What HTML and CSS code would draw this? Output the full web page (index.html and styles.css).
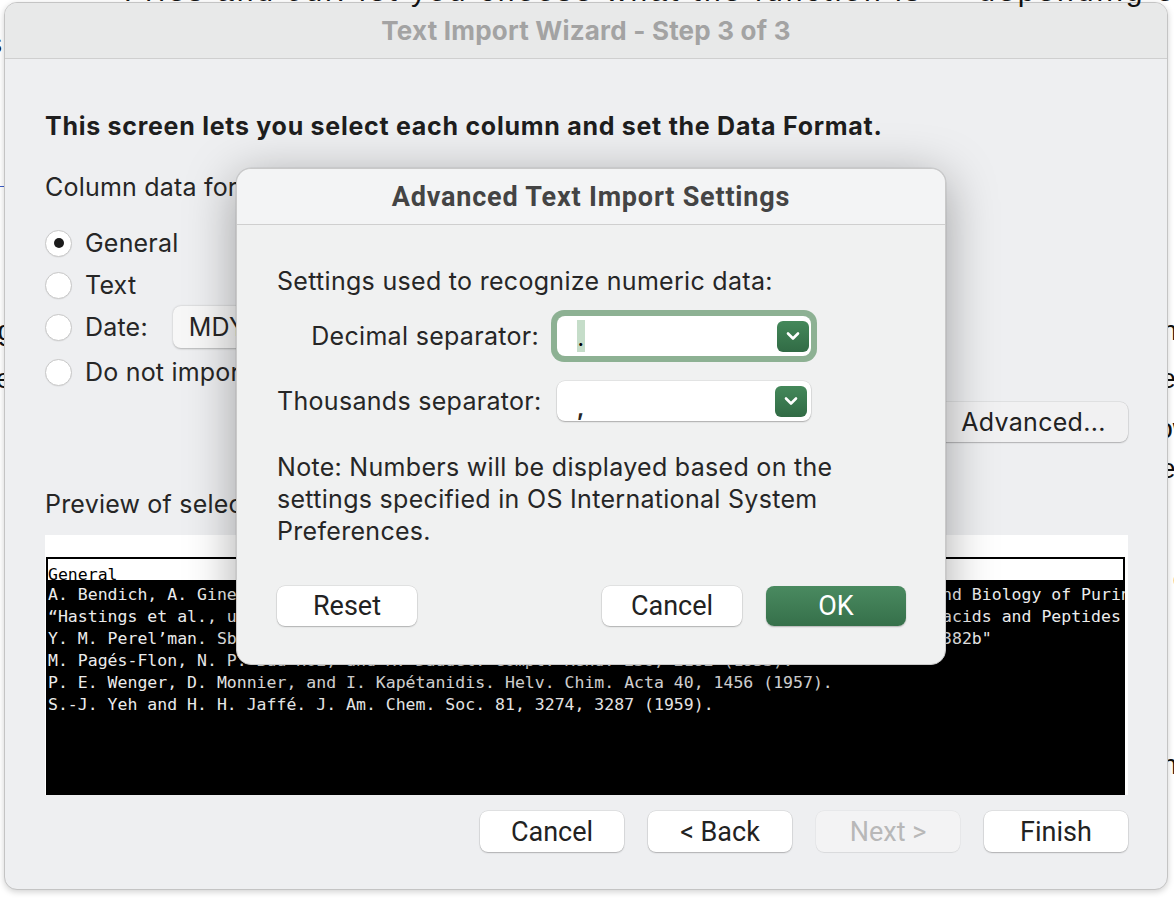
FILE: index.html
```html
<!DOCTYPE html>
<html>
<head>
<meta charset="utf-8">
<link rel="stylesheet" href="styles.css">
</head>
<body>
<div class="doc">
  <p class="doc-line l2">s</p>
  <p class="doc-line l3 link">&nbsp;</p>
  <p class="doc-line l4">ug calculated values and constants for the relevant series of compounds is shown in the tables here for</p>
  <p class="doc-line l5">ce for the computation of the results of the related reaction constants as printed in the tables used:</p>
  <p class="doc-line l6">e of the substituent constants used by the program and the results are entered in the tables below e.</p>
  <p class="doc-line l6b">of the substituent constants used by the program and the results are entered in the tables below ta.</p>
  <p class="doc-line l7">u table of all of the values which were obtained in the data set is entered here in the rows below of</p>
  <p class="doc-line l8 purple">c</p>
  <p class="doc-line l9">o computation of the constants in the equation shown above for each of the rows in the tables shown o</p>
</div>

<div class="top-bleed"><div class="top-bleed-text">Fries and Jur. let you choose what the function is — depending on your</div></div>

<div class="window">
  <div class="titlebar">Text Import Wizard - Step 3 of 3</div>
  <div class="wiz-body">
    <h1 class="wiz-heading">This screen lets you select each column and set the Data Format.</h1>
    <p class="wiz-label">Column data format:</p>
    <div class="radio-list">
      <label class="radio-row"><span class="radio checked"></span><span>General</span></label>
      <label class="radio-row"><span class="radio"></span><span>Text</span></label>
      <label class="radio-row"><span class="radio"></span><span>Date:</span><span class="mdy">MDY</span></label>
      <label class="radio-row last"><span class="radio"></span><span>Do not import column (skip)</span></label>
    </div>
    <div class="advanced-row"><button class="btn advanced">Advanced...</button></div>
    <p class="wiz-label preview-label">Preview of selected data:</p>
    <div class="preview">
      <div class="preview-inner">
        <div class="preview-head"><span>General</span></div>
        <div class="preview-rows">
          <div>A. Bendich, A. Giner-Sorolla, and J. J. Fox. Ciba Foundation Symposium, on the Chemistry and Biology of Purines (1957).</div>
          <div>“Hastings et al., unpublished data,” cited in: J. T. Edsall and J. Wyman. Proteins, Amino acids and Peptides (1943).</div>
          <div>Y. M. Perel’man. Sbornik Statei Obshch. Khim. 2, 1101–6 (1953); Chem. Abstr. 49, 5382a, "5382b"</div>
          <div>M. Pagés-Flon, N. P. Buu-Hoï, and R. Daudel. Compt. Rend. 236, 2182 (1953).</div>
          <div>P. E. Wenger, D. Monnier, and I. Kapétanidis. Helv. Chim. Acta 40, 1456 (1957).</div>
          <div>S.-J. Yeh and H. H. Jaffé. J. Am. Chem. Soc. 81, 3274, 3287 (1959).</div>
        </div>
      </div>
    </div>
    <div class="wiz-buttons">
      <button class="btn wbtn">Cancel</button>
      <button class="btn wbtn">&lt; Back</button>
      <button class="btn wbtn disabled">Next &gt;</button>
      <button class="btn wbtn">Finish</button>
    </div>
  </div>
</div>

<div class="dialog">
  <div class="dlg-title">Advanced Text Import Settings</div>
  <div class="dlg-body">
    <p class="dlg-text">Settings used to recognize numeric data:</p>
    <div class="sep-grid">
      <span class="sep-label">Decimal separator:</span>
      <div class="focus-ring">
        <div class="select">
          <span class="sel-value"><span class="sel-hl">.</span></span>
          <span class="chev"><svg width="16" height="10" viewBox="0 0 16 10"><path d="M3 2.5 L8 7.5 L13 2.5" fill="none" stroke="#fff" stroke-width="2.6" stroke-linecap="round" stroke-linejoin="round"/></svg></span>
        </div>
      </div>
      <span class="sep-label left">Thousands separator:</span>
      <div class="plain-wrap">
        <div class="select">
          <span class="sel-value comma">,</span>
          <span class="chev"><svg width="16" height="10" viewBox="0 0 16 10"><path d="M3 2.5 L8 7.5 L13 2.5" fill="none" stroke="#fff" stroke-width="2.6" stroke-linecap="round" stroke-linejoin="round"/></svg></span>
        </div>
      </div>
    </div>
    <p class="dlg-note">Note: Numbers will be displayed based on the<br>settings specified in OS International System<br>Preferences.</p>
    <div class="dlg-buttons">
      <button class="btn dbtn">Reset</button>
      <span class="spacer"></span>
      <button class="btn dbtn">Cancel</button>
      <button class="btn dbtn ok">OK</button>
    </div>
  </div>
</div>
</body>
</html>
```

FILE: styles.css
```css
* { box-sizing: border-box; }
html, body { margin: 0; padding: 0; }
body {
  width: 1174px;
  height: 902px;
  overflow: hidden;
  position: relative;
  background: #ffffff;
  font-family: Inter, "Noto Sans", sans-serif;
  color: #262626;
}

/* background document, mostly hidden by the window */
.doc {
  position: absolute;
  left: 0;
  top: 0;
  width: 1174px;
  height: 902px;
  overflow: hidden;
  font-family: "Liberation Sans", sans-serif;
  font-size: 28px;
  color: #111;
}
.doc-line { margin: 0; white-space: nowrap; height: 0; position: relative; left: -18px; }
.l2 { top: 28px; left: -12px; }
.l3 { top: 186px; }
.link { border-bottom: 1px solid #3a5cc6; width: 40px; }
.l4 { top: 314px; }
.l5 { top: 362px; }
.l6 { top: 412px; }
.l6b { top: 452px; left: 30px; }
.l7 { top: 562px; }
.l8 { top: 650px; left: -14px; }
.purple { color: #7a2ea0; }
.l9 { top: 748px; }

.top-bleed {
  position: absolute;
  left: 124px;
  top: 0;
  width: 1050px;
  height: 8px;
  overflow: hidden;
  z-index: 5;
}
.top-bleed-text {
  margin-top: -24px;
  white-space: nowrap;
  font-family: "Liberation Sans", sans-serif;
  font-size: 30px;
  line-height: 30px;
  color: #111;
  letter-spacing: 3px;
}

/* wizard window */
.window {
  position: absolute;
  left: 4px;
  top: 2px;
  width: 1164px;
  height: 888px;
  background: #eeeff1;
  border: 1px solid #c4c4c4;
  border-radius: 13px;
  box-shadow: 0 2px 6px rgba(0,0,0,0.18);
  overflow: hidden;
  display: flex;
  flex-direction: column;
}
.titlebar {
  height: 56px;
  flex: none;
  background: #e8e9e9;
  border-bottom: 1px solid #cfcfcf;
  display: flex;
  align-items: center;
  justify-content: center;
  font-size: 26px;
  letter-spacing: 0.2px;
  font-weight: 700;
  color: #a3a3a3;
}
.wiz-body {
  padding: 0 39px 0 40px;
  display: flex;
  flex-direction: column;
}
.wiz-heading {
  margin: 52px 0 0;
  font-size: 25px;
  font-weight: 700;
  line-height: 30px;
  letter-spacing: 0.72px;
  color: #1e1e1e;
}
.wiz-label {
  margin: 31px 0 0;
  font-size: 25px;
  letter-spacing: 0.2px;
  line-height: 30px;
}
.radio-list {
  margin-top: 20px;
  display: flex;
  flex-direction: column;
}
.radio-row {
  display: flex;
  align-items: center;
  gap: 13px;
  font-size: 25px;
  letter-spacing: 0.2px;
  height: 42px;
}
.radio-row.last { margin-top: 3px; }
.radio {
  width: 27px;
  height: 27px;
  border-radius: 50%;
  background: #fff;
  border: 1px solid #c8c8c8;
  box-shadow: 0 0.5px 1px rgba(0,0,0,0.08);
  display: flex;
  align-items: center;
  justify-content: center;
  flex: none;
}
.radio.checked::after {
  content: "";
  width: 10px;
  height: 10px;
  border-radius: 50%;
  background: #1b1b1b;
}
.mdy {
  margin-left: 12px;
  background: #f7f7f7;
  border-radius: 8px;
  box-shadow: 0 0.5px 2px rgba(0,0,0,0.25);
  height: 42px;
  width: 200px;
  padding-left: 16px;
  display: flex;
  align-items: center;
}

.btn {
  font-family: Roboto, "Noto Sans", sans-serif;
  font-size: 27px;
  color: #222;
  background: #ffffff;
  border: none;
  border-radius: 8px;
  box-shadow: 0 0 0 0.5px rgba(0,0,0,0.12), 0 1px 1.5px rgba(0,0,0,0.22);
  padding: 0;
}
.advanced-row {
  display: flex;
  justify-content: flex-end;
  margin-top: 9px;
}
.advanced {
  width: 230px;
  height: 40px;
  background: #f1f1f2;
  padding-left: 41px;
  font-family: Inter, sans-serif;
  font-size: 25px;
  letter-spacing: 0.3px;
}
.preview-label { margin-top: 47px; }
.preview {
  margin-top: 16px;
  width: 1083px;
  height: 260px;
  background: #fff;
  padding: 22px 3px 0 1px;
}
.preview-inner {
  background: #000;
  height: 238px;
  padding: 2px 2px 0;
  font-family: "DejaVu Sans Mono", monospace;
  font-size: 16.5px;
  overflow: hidden;
  white-space: nowrap;
}
.preview-head {
  background: #fff;
  color: #000;
  height: 21px;
  overflow: hidden;
  line-height: 20px;
  padding-top: 6px;
}
.preview-rows {
  color: #ececec;
  line-height: 22px;
  padding-top: 4px;
}
.wiz-buttons {
  display: flex;
  justify-content: flex-end;
  gap: 24px;
  margin-top: 16px;
}
.wbtn {
  width: 144px;
  height: 41px;
}
.wbtn.disabled {
  background: #f3f3f4;
  color: #b8b8b8;
  box-shadow: 0 0 0 0.5px rgba(0,0,0,0.06), 0 1px 1px rgba(0,0,0,0.06);
}

/* advanced dialog (modal sheet) */
.dialog {
  position: absolute;
  left: 236px;
  top: 168px;
  width: 710px;
  height: 497px;
  background: #f0f1f1;
  border: 1px solid #c9c9c9;
  border-radius: 15px;
  box-shadow: 0 10px 50px rgba(0,0,0,0.34), 0 0 0 0.5px rgba(0,0,0,0.1);
  overflow: hidden;
  z-index: 10;
}
.dlg-title {
  height: 56px;
  border-bottom: 1px solid #cfcfcf;
  background: #f3f4f5;
  display: flex;
  align-items: center;
  justify-content: center;
  font-family: Roboto, sans-serif;
  font-weight: 700;
  font-size: 27px;
  letter-spacing: 0.8px;
  color: #444;
}
.dlg-body {
  padding: 0 39px 0 40px;
  font-size: 25px;
  letter-spacing: 0.3px;
  color: #262626;
}
.dlg-text {
  margin: 41px 0 0;
  line-height: 30px;
}
.sep-grid {
  margin-top: 14px;
  display: grid;
  grid-template-columns: 262px 266px;
  column-gap: 12px;
  row-gap: 19px;
  align-items: center;
  justify-items: end;
}
.sep-label { line-height: 30px; white-space: nowrap; }
.sep-label.left { justify-self: start; }
.focus-ring {
  justify-self: start;
  padding: 6px;
  border-radius: 13px;
  background: #8db193;
  width: 266px;
}
.plain-wrap {
  justify-self: start;
  padding: 0 6px;
  width: 266px;
}
.select {
  height: 40px;
  background: #fff;
  border-radius: 8px;
  box-shadow: 0 0 0 0.5px rgba(0,0,0,0.1), 0 1px 1.5px rgba(0,0,0,0.25);
  display: flex;
  align-items: center;
  justify-content: space-between;
  padding: 0 4px 0 20px;
}
.focus-ring .select { box-shadow: none; padding-right: 2px; }
.sel-hl {
  display: inline-block;
  background: #c5ddc9;
  width: 8px;
  height: 32px;
  line-height: 40px;
  font-size: 18px;
  text-align: center;
  color: #000;
  font-weight: 700;
}
.comma { padding-top: 14px; font-weight: 700; font-size: 22px; }
.chev {
  width: 32px;
  height: 31px;
  border-radius: 6px;
  background: linear-gradient(#44885a, #316b45);
  display: flex;
  align-items: center;
  justify-content: center;
}
.dlg-note {
  margin: 30px 0 0;
  line-height: 32px;
}
.dlg-buttons {
  display: flex;
  margin-top: 39px;
  gap: 24px;
}
.spacer { flex: 1; }
.dbtn {
  width: 140px;
  height: 40px;
  letter-spacing: 0;
}
.dbtn.ok {
  background: linear-gradient(#4a8a60, #36704a);
  color: #fff;
  box-shadow: 0 1px 1.5px rgba(0,0,0,0.25);
}
```
